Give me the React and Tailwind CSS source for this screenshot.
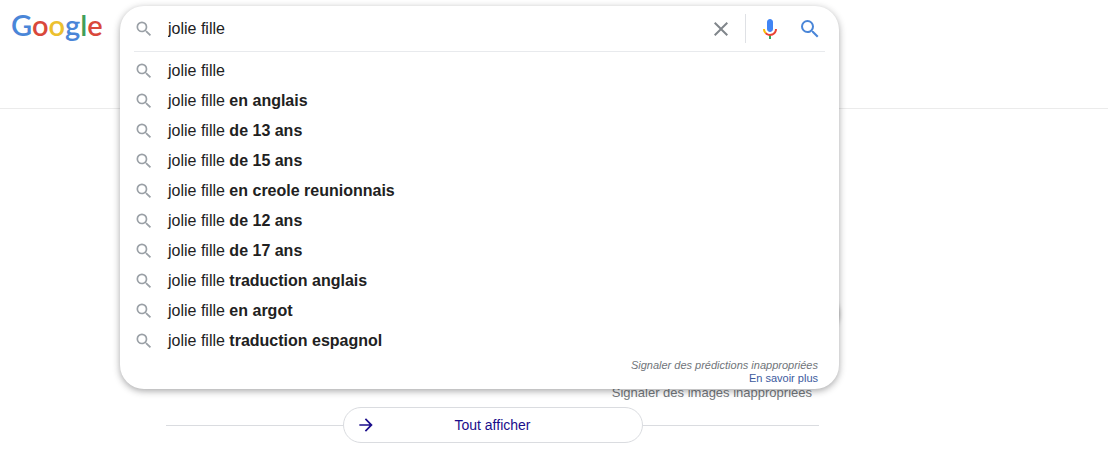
import React, { useState } from 'react';

const suggestions = [
  '',
  'en anglais',
  'de 13 ans',
  'de 15 ans',
  'en creole reunionnais',
  'de 12 ans',
  'de 17 ans',
  'traduction anglais',
  'en argot',
  'traduction espagnol'
];

const SearchIcon = ({ className }) => (
  <svg viewBox="0 0 24 24" fill="currentColor" className={className} aria-hidden="true">
    <path d="M15.5 14h-.79l-.28-.27A6.471 6.471 0 0 0 16 9.5 6.5 6.5 0 1 0 9.5 16c1.61 0 3.09-.59 4.23-1.57l.27.28v.79l5 4.99L20.49 19l-4.99-5zm-6 0C7.01 14 5 11.99 5 9.5S7.01 5 9.5 5 14 7.01 14 9.5 11.99 14 9.5 14z" />
  </svg>
);

const CloseIcon = () => (
  <svg viewBox="0 0 24 24" fill="currentColor" className="w-6 h-6" aria-hidden="true">
    <path d="M19 6.41L17.59 5 12 10.59 6.41 5 5 6.41 10.59 12 5 17.59 6.41 19 12 13.41 17.59 19 19 17.59 13.41 12z" />
  </svg>
);

const MicIcon = () => (
  <svg viewBox="0 0 24 24" className="w-6 h-6" aria-hidden="true">
    <path fill="#4285f4" d="m12 15c1.66 0 3-1.31 3-2.97v-7.02c0-1.66-1.34-3.01-3-3.01s-3 1.34-3 3.01v7.02c0 1.66 1.34 2.97 3 2.97z" />
    <path fill="#34a853" d="m11 18.08h2v3.92h-2z" />
    <path fill="#fbbc05" d="m7.05 16.87c-1.27-1.33-2.05-2.83-2.05-4.87h2c0 1.45 0.56 2.42 1.47 3.38v0.32l-1.15 1.18z" />
    <path fill="#ea4335" d="m12 16.93a4.97 5.25 0 0 1 -3.54 -1.55l-1.41 1.49c1.26 1.34 3.02 2.13 4.95 2.13 3.87 0 6.99-2.92 6.99-7h-1.99c0 2.92-2.24 4.93-5 4.93z" />
  </svg>
);

const Logo = () => (
  <a href="#" aria-label="Google" className="w-[93px] shrink-0 font-[Lato,sans-serif] text-[29px] leading-[38px] font-semibold">
    <span className="text-[#4a86d8]">G</span>
    <span className="text-[#d9483b]">o</span>
    <span className="text-[#ecc02f]">o</span>
    <span className="text-[#4a86d8]">g</span>
    <span className="text-[#3f9f5a]">l</span>
    <span className="text-[#d9483b]">e</span>
  </a>
);

const SearchBox = () => {
  const [query, setQuery] = useState('jolie fille');

  return (
    <form
      role="search"
      onSubmit={(e) => e.preventDefault()}
      className="relative flex-1 max-w-[719px]"
    >
      {/* The panel hangs over the results below */}
      <div className="absolute inset-x-0 top-0 z-10 rounded-3xl bg-white pb-1 shadow-[0_2px_7px_rgba(32,33,36,0.4)]">
        <div className="flex h-[45px] items-center pl-3.5 pr-[17px]">
          <SearchIcon className="w-5 h-5 shrink-0 text-[#9aa0a6]" />
          <input
            type="text"
            aria-label="Rechercher"
            value={query}
            onChange={(e) => setQuery(e.target.value)}
            className="ml-3.5 min-w-0 flex-1 bg-transparent text-base text-[#212121] outline-none"
          />
          <button type="button" aria-label="Effacer" onClick={() => setQuery('')} className="text-[#80868b]">
            <CloseIcon />
          </button>
          <div className="mx-3 h-[29px] border-l border-[#dfe1e5]" />
          <button type="button" aria-label="Recherche vocale">
            <MicIcon />
          </button>
          <button type="submit" aria-label="Recherche Google" className="ml-4 text-[#4a86d8]">
            <SearchIcon className="w-6 h-6" />
          </button>
        </div>

        <div className="mx-3.5 mb-1 border-t border-[#e8eaed]" />

        <ul>
          {suggestions.map((text, index) => (
            <li key={index} className="flex h-[30px] items-center gap-3.5 pl-3.5 text-base text-[#212121]">
              <SearchIcon className="w-5 h-5 shrink-0 text-[#9aa0a6]" />
              <span>
                jolie fille {text && <b>{text}</b>}
              </span>
            </li>
          ))}
        </ul>

        <div className="flex flex-col items-end pt-[3px] pr-[21px] text-[11px] leading-[13px]">
          <a href="#" className="italic text-[#70757a]">Signaler des prédictions inappropriées</a>
          <a href="#" className="text-[#3c5a9e]">En savoir plus</a>
        </div>
      </div>
    </form>
  );
};

const App = () => {
  return (
    <div className="min-h-screen bg-white font-['Liberation_Sans',Arial,sans-serif]">
      <header className="flex h-[109px] gap-4 border-b border-[#ebebeb] pt-1.5 pl-[11px] pr-4">
        <Logo />
        <SearchBox />
      </header>

      <main className="ml-[166px] mr-4 max-w-[653px]">
        <div className="flex h-[274px] items-end justify-end pb-[50px]">
          <button type="button" aria-label="Images suivantes" className="-mr-5 h-10 w-10 rounded-full bg-white shadow-[0_1px_4px_rgba(0,0,0,0.4)]" />
        </div>
        <div className="flex justify-end pr-[7px]">
          <a href="#" className="text-[13px] leading-5 text-[#70757a]">Signaler des images inappropriées</a>
        </div>
        <div className="mt-1 flex items-center">
          <div className="flex-1 border-t border-[#dadce0]" />
          <button type="button" className="flex h-9 w-[300px] items-center rounded-full border border-[#dadce0] px-3 text-sm text-[#1a0d8b]">
            <svg viewBox="0 0 24 24" fill="currentColor" className="w-5 h-5" aria-hidden="true">
              <path d="M12 4l-1.41 1.41L16.17 11H4v2h12.17l-5.58 5.59L12 20l8-8z" />
            </svg>
            <span className="flex-1 pr-5">Tout afficher</span>
          </button>
          <div className="flex-1 border-t border-[#dadce0]" />
        </div>
      </main>
    </div>
  );
};

export default App;
